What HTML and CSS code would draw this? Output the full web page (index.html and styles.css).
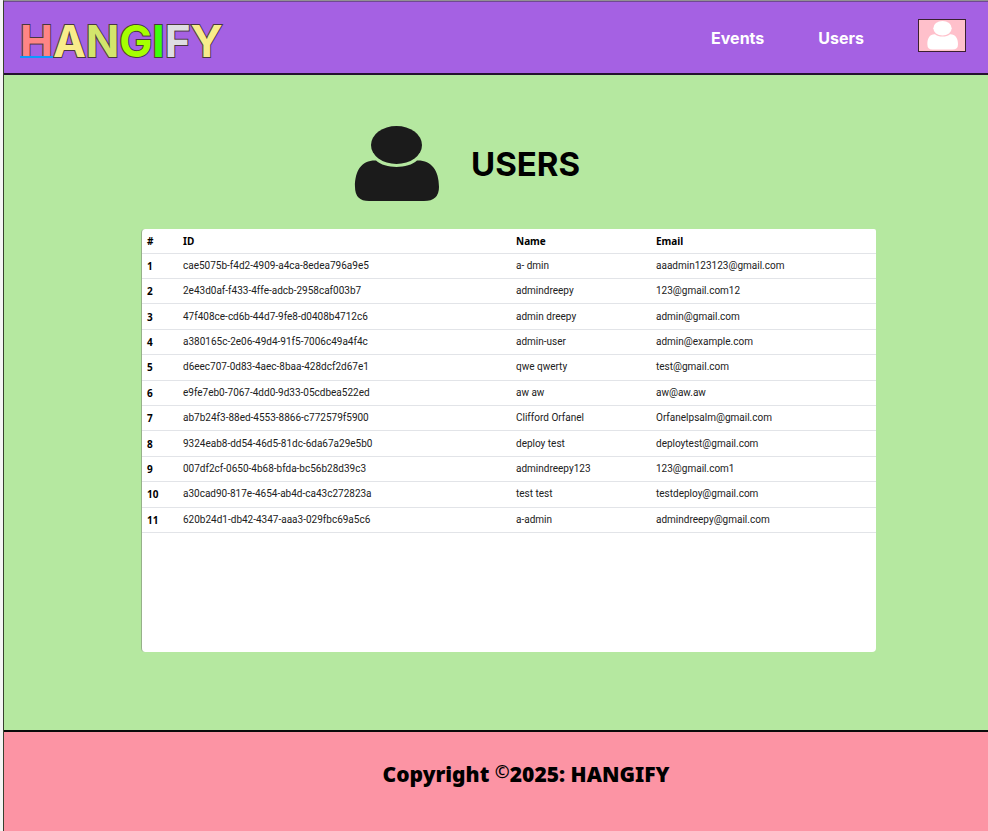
FILE: index.html
```html
<!DOCTYPE html>
<html lang="en">
<head>
<meta charset="utf-8">
<title>Hangify - Users</title>
<link rel="stylesheet" href="styles.css">
</head>
<body>
<div class="app">
  <header class="topbar">
    <a class="logo" href="#" aria-label="HANGIFY"><span class="c1">H</span><span class="c2">A</span><span class="c3">N</span><span class="c4">G</span><span class="c5">I</span><span class="c6">F</span><span class="c2">Y</span></a>
    <nav class="nav">
      <a href="#">Events</a>
      <a href="#">Users</a>
      <button class="profile" type="button" aria-label="Profile">
        <svg viewBox="0 0 86 76" preserveAspectRatio="none" aria-hidden="true"><ellipse cx="43" cy="19" rx="25.500" ry="19"/><path d="M22 34.500C31 43 55 43 64 34.500C78 34 86 44 86 61Q86 75 71 75H15Q1 75 1 61C1 44 8 34 22 34.500Z"/></svg>
      </button>
    </nav>
  </header>
  <main class="content">
    <div class="heading">
      <svg viewBox="0 0 86 76" aria-hidden="true"><ellipse cx="43.500" cy="19" rx="25.500" ry="19"/><path d="M23 34.500C32 43 55 43 64 34.500C78 34 86 44 86 61Q86 75 71 75H16Q2 75 2 61C2 44 9 34 23 34.500Z"/></svg>
      <h1>USERS</h1>
    </div>
    <div class="panel">
      <table>
        <thead><tr><th class="num" scope="col">#</th><th class="id" scope="col">ID</th><th class="name" scope="col">Name</th><th scope="col">Email</th></tr></thead>
        <tbody>
          <tr><th scope="row">1</th><td>cae5075b-f4d2-4909-a4ca-8edea796a9e5</td><td>a- dmin</td><td>aaadmin123123@gmail.com</td></tr>
          <tr><th scope="row">2</th><td>2e43d0af-f433-4ffe-adcb-2958caf003b7</td><td>admindreepy</td><td>123@gmail.com12</td></tr>
          <tr><th scope="row">3</th><td>47f408ce-cd6b-44d7-9fe8-d0408b4712c6</td><td>admin dreepy</td><td>admin@gmail.com</td></tr>
          <tr><th scope="row">4</th><td>a380165c-2e06-49d4-91f5-7006c49a4f4c</td><td>admin-user</td><td>admin@example.com</td></tr>
          <tr><th scope="row">5</th><td>d6eec707-0d83-4aec-8baa-428dcf2d67e1</td><td>qwe qwerty</td><td>test@gmail.com</td></tr>
          <tr><th scope="row">6</th><td>e9fe7eb0-7067-4dd0-9d33-05cdbea522ed</td><td>aw aw</td><td>aw@aw.aw</td></tr>
          <tr><th scope="row">7</th><td>ab7b24f3-88ed-4553-8866-c772579f5900</td><td>Clifford Orfanel</td><td>Orfanelpsalm@gmail.com</td></tr>
          <tr><th scope="row">8</th><td>9324eab8-dd54-46d5-81dc-6da67a29e5b0</td><td>deploy test</td><td>deploytest@gmail.com</td></tr>
          <tr><th scope="row">9</th><td>007df2cf-0650-4b68-bfda-bc56b28d39c3</td><td>admindreepy123</td><td>123@gmail.com1</td></tr>
          <tr><th scope="row">10</th><td>a30cad90-817e-4654-ab4d-ca43c272823a</td><td>test test</td><td>testdeploy@gmail.com</td></tr>
          <tr><th scope="row">11</th><td>620b24d1-db42-4347-aaa3-029fbc69a5c6</td><td>a-admin</td><td>admindreepy@gmail.com</td></tr>
        </tbody>
      </table>
    </div>
  </main>
  <footer class="footer"><p>Copyright <span class="mark">©</span>2025: HANGIFY</p></footer>
</div>
</body>
</html>
```
FILE: styles.css
```css
* { box-sizing: border-box; }
body {
  margin: 0;
  padding-left: 3px;
  background: #f5f5f5;
  font-family: Inter, "Liberation Sans", sans-serif;
}
.app {
  display: flex;
  flex-direction: column;
  min-height: 100vh;
  border-left: 1px solid #37402f;
  border-top: 1px solid #929292;
}
.topbar {
  display: flex;
  align-items: center;
  justify-content: space-between;
  height: 74px;
  padding: 0 22px 0 16px;
  background: #a561e3;
  border-top: 1px solid #6f4a92;
  border-bottom: 2px solid #24122f;
}
.logo {
  padding-top: 6px;
  font-size: 44px;
  line-height: 54px;
  font-weight: 700;
  text-decoration: none;
  -webkit-text-stroke: 2px #49383f;
  paint-order: stroke fill;
}
.logo span { display: inline-block; }
.c1 { position: relative; color: #ff8585; }
.c1::after {
  content: "";
  position: absolute;
  left: 0;
  right: 0;
  bottom: 10px;
  height: 2px;
  background: #0d99ff;
}
.c2 { color: #f8ec8b; }
.c3 { color: #d3e56c; }
.c4 { color: #a6ff00; }
.c5 { color: #3cff0a; }
.c6 { color: #dedee2; }
.nav {
  display: flex;
  align-items: center;
  gap: 54px;
}
.nav a {
  color: #fff;
  font-size: 16px;
  font-weight: 700;
  text-decoration: none;
}
.profile {
  display: flex;
  justify-content: center;
  width: 48px;
  height: 33px;
  padding: 1px;
  margin-bottom: 4px;
  background: #ffc0cb;
  border: 1px solid #3a2030;
}
.profile svg { width: 31px; height: 29px; fill: #fff; }
.content {
  flex: 1;
  padding: 51px 112px 78px 137px;
  background: #b5e8a0;
}
.heading {
  display: flex;
  align-items: center;
  gap: 32px;
  padding-left: 212px;
  margin-bottom: 27px;
}
.heading svg { width: 86px; height: 76px; fill: #1b1b1b; }
h1 {
  margin: 0;
  font-size: 33px;
  line-height: 40px;
  font-weight: 700;
}
.panel {
  height: 423px;
  background: #fff;
  border-left: 1px solid #96b189;
  border-radius: 4px 2px 4px 4px;
}
table {
  width: 100%;
  height: 304px;
  border-collapse: collapse;
  table-layout: fixed;
  font-family: Roboto, "Noto Sans", sans-serif;
  font-size: 10px;
  line-height: 14px;
  color: #212121;
}
thead tr { height: 24px; }
th, td {
  padding: 0 0 0 5px;
  text-align: left;
  border-bottom: 1px solid #e2e4e8;
}
th { color: #000; font-family: "Noto Sans", sans-serif; font-weight: 700; }
.num { width: 36px; }
.id { width: 333px; }
.name { width: 140px; }
.footer {
  height: 101px;
  padding: 27px 0 0 60px;
  border-top: 2px solid #0a0a0a;
  background: #fc94a4;
  text-align: center;
}
.footer p {
  margin: 0;
  font-family: "Noto Sans", sans-serif;
  font-size: 21px;
  line-height: 30px;
  font-weight: 900;
}
.mark { font-weight: 600; font-size: 18px; line-height: 16px; vertical-align: 4px; }
```
